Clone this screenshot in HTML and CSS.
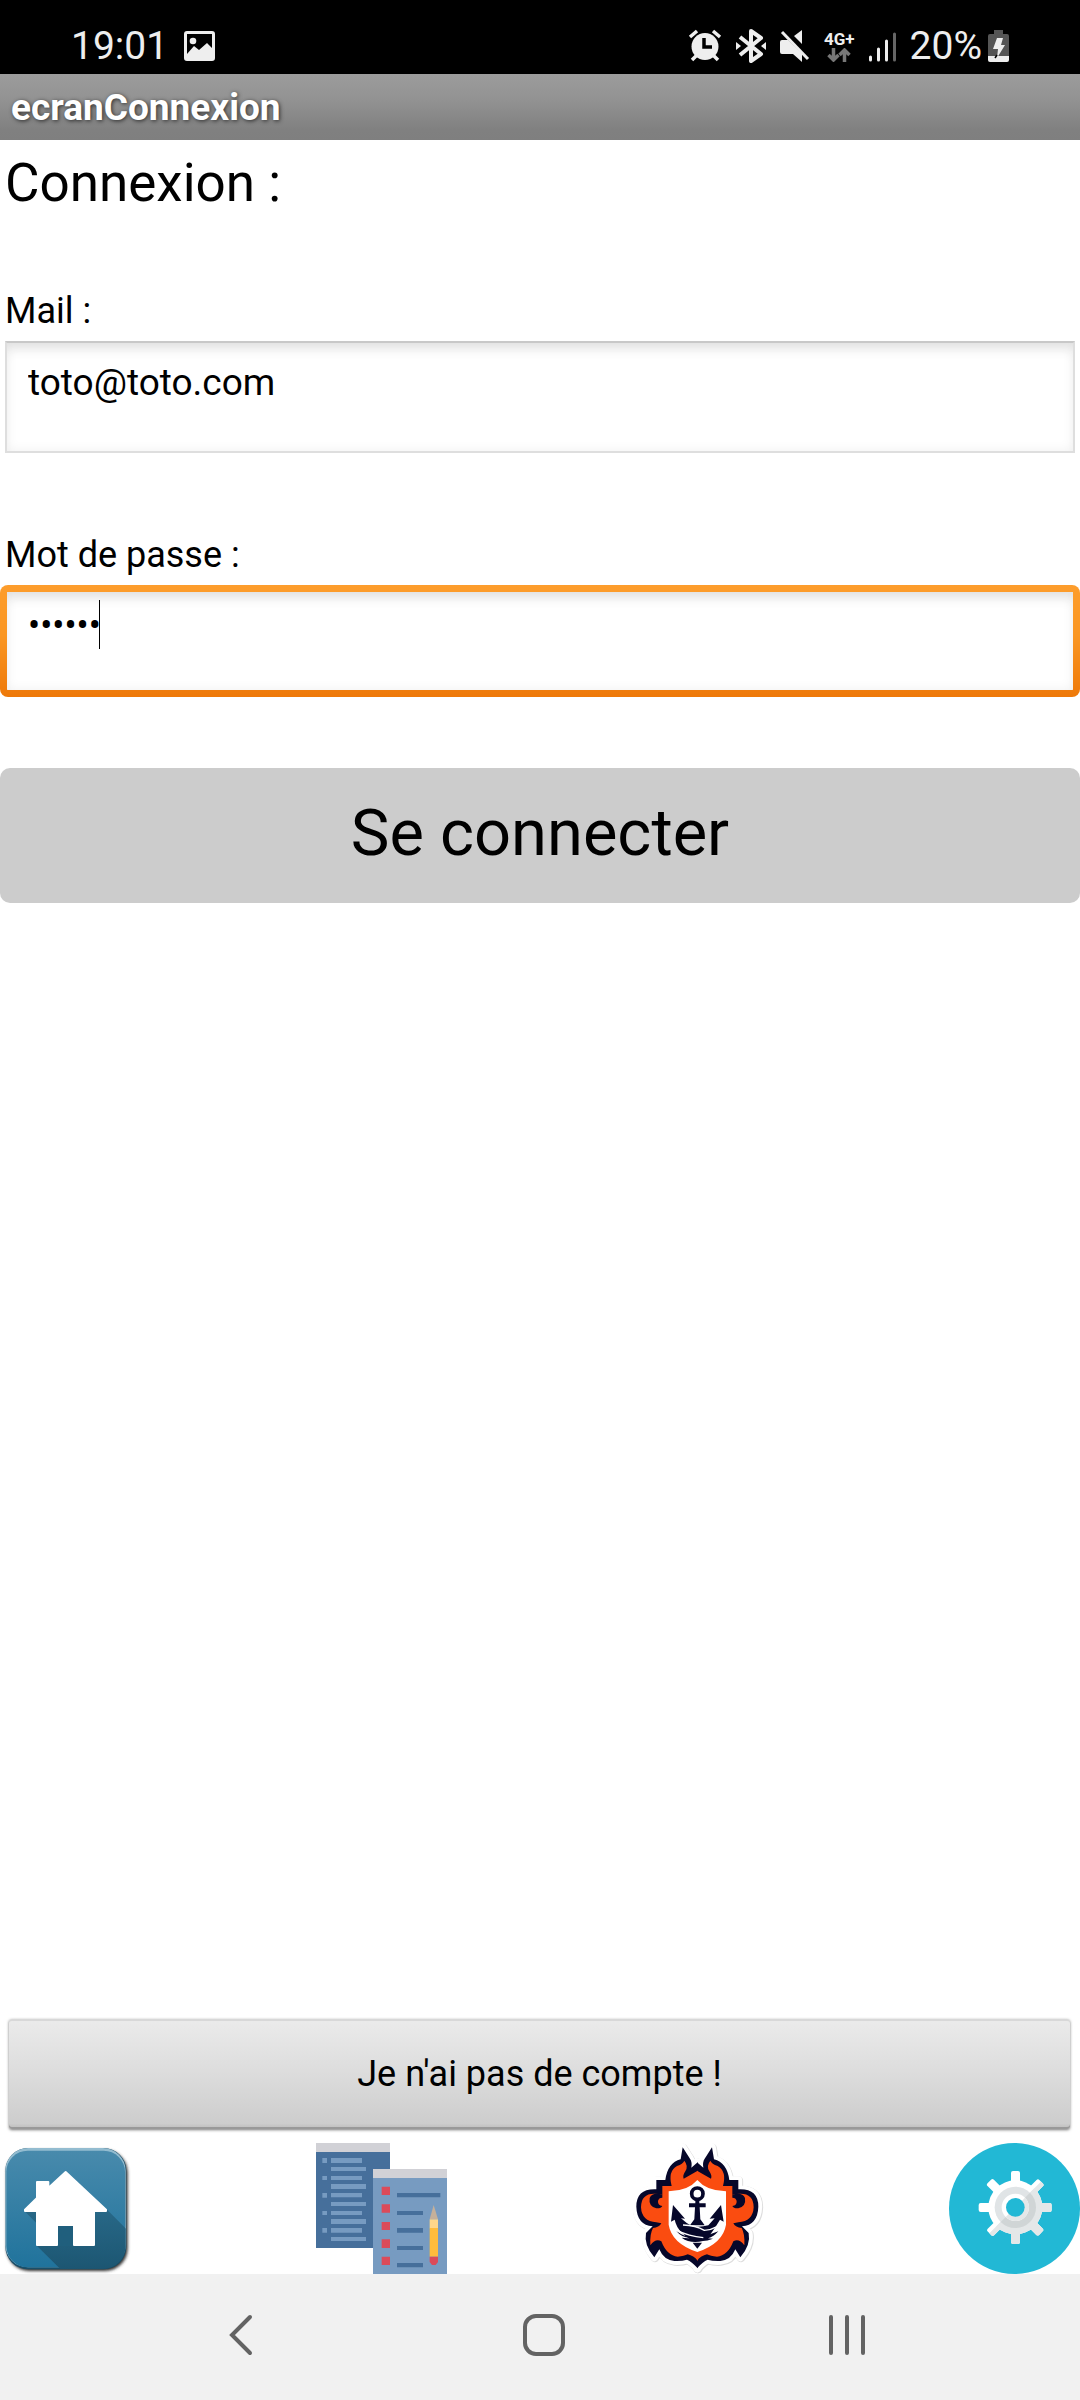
FILE: index.html
```html
<!DOCTYPE html>
<html lang="fr">
<head>
    <meta charset="UTF-8">
    <meta name="viewport" content="width=device-width, initial-scale=1.0">
    <title>ecranConnexion</title>
    <link rel="stylesheet" href="styles.css">
</head>
<body>
    <div class="status-bar">
        <span class="clock">19:01</span>
        <svg class="icon-picture" width="31" height="30" viewBox="0 0 31 30">
            <path fill="#eee" fill-rule="evenodd" d="M3 0h25a3 3 0 0 1 3 3v24a3 3 0 0 1-3 3H3a3 3 0 0 1-3-3V3a3 3 0 0 1 3-3zM3 3v20l7-8 5 4 8-7 5 5V3z"/>
            <circle cx="9" cy="10" r="3.3" fill="#eee"/>
        </svg>
        <div class="status-icons">
            <svg width="34" height="34" viewBox="0 0 34 34">
                <circle cx="17" cy="17.500" r="13.500" fill="#eee"/>
                <path fill="none" stroke="#eee" stroke-width="3.500" d="M2 8l7-6M32 8l-7-6M9 26l-5 5M25 26l5 5"/>
                <path fill="none" stroke="#000" stroke-width="3.500" d="M16 9v9h8"/>
            </svg>
            <svg width="30" height="34" viewBox="0 0 30 34">
                <path fill="none" stroke="#eee" stroke-width="4" stroke-linejoin="round" d="M4 8l21 17-10 7V2l10 7L4 26"/>
                <path fill="#eee" d="M0 13l5 4-5 4zM30 13l-5 4 5 4z"/>
            </svg>
            <svg width="30" height="34" viewBox="0 0 30 34">
                <path fill="#eee" d="M0 13q0-2 2-2h6l14 14v8l-9-8H2q-2 0-2-2zM22 1v14l-8-8z"/>
                <path stroke="#eee" stroke-width="3" d="M2 3l26 27"/>
            </svg>
            <div class="network">
                <span>4G+</span>
                <svg width="24" height="14" viewBox="0 0 24 14">
                    <path fill="none" stroke="#777" stroke-width="3.500" d="M6.500 0v12M1.500 7l5 5 5-5M17.500 14V2M12.500 7l5-5 5 5"/>
                </svg>
            </div>
            <svg width="27" height="34" viewBox="0 0 27 34">
                <path fill="none" stroke="#eee" stroke-width="3" stroke-linecap="round" d="M1.500 28v3M9.500 20v11M17.500 12v19"/>
                <path stroke="#666" stroke-width="3" stroke-linecap="round" d="M25.500 5v26"/>
            </svg>
        </div>
        <span class="battery-level">20%</span>
        <svg class="icon-battery" width="21" height="34" viewBox="0 0 21 34">
            <path fill="#555" d="M6 1h9v4h4q2 0 2 2v20H0V7q0-2 2-2h4z"/>
            <path fill="#eee" d="M0 27h21v4q0 2-2 2H2q-2 0-2-2z"/>
            <path fill="#eee" d="M9 9h6l-2 7h4L9 29l1-9H5z"/>
            <path stroke="#000" stroke-width="1.500" d="M7 29l2-3"/>
        </svg>
    </div>

    <header class="title-bar">ecranConnexion</header>

    <main class="screen">
        <form class="login-form" onsubmit="return false">
            <h1>Connexion :</h1>

            <div class="form-group">
                <label for="mail">Mail :</label>
                <input type="email" id="mail" class="field" value="toto@toto.com">
            </div>

            <div class="form-group">
                <label for="password">Mot de passe :</label>
                <div class="focused-field">
                    <input type="password" id="password" class="field active" value="secret">
                    <span class="caret"></span>
                </div>
            </div>

            <button type="submit" class="btn-login">Se connecter</button>
        </form>

        <button type="button" class="btn-register">Je n'ai pas de compte !</button>

        <nav class="tabs">
            <a href="#accueil" aria-label="Accueil">
                <svg viewBox="0 39 393 393">
                    <defs>
                        <linearGradient id="home-bg" x1="0" y1="0" x2="0" y2="1">
                            <stop offset="0" stop-color="#488aac"/>
                            <stop offset="1" stop-color="#20739c"/>
                        </linearGradient>
                        <linearGradient id="home-shade" x1="0" y1="0" x2="0" y2="1">
                            <stop offset="0" stop-color="#286887"/>
                            <stop offset="1" stop-color="#1c5672"/>
                        </linearGradient>
                        <clipPath id="home-clip"><rect x="16" y="54" width="361" height="362" rx="68"/></clipPath>
                        <filter id="home-shadow"><feGaussianBlur stdDeviation="4"/></filter>
                    </defs>
                    <rect x="20" y="60" width="363" height="363" rx="68" fill="#333" filter="url(#home-shadow)"/>
                    <rect x="16" y="54" width="363" height="364" rx="68" fill="#194f69"/>
                    <rect x="16" y="54" width="361" height="358" rx="68" fill="#93bcd0"/>
                    <rect x="19" y="62" width="356" height="350" rx="64" fill="url(#home-bg)"/>
                    <path clip-path="url(#home-clip)" fill="url(#home-shade)" d="M320 238l60 60v120H182l-74-73V278l-34-34h30z"/>
                    <path fill="#fff" stroke="#fff" stroke-width="6" stroke-linejoin="round" d="M197 126l121 113v4h-36v102h-60v-60h-51v60h-60V243H75v-4l36-35v-48h34v18z"/>
                    <path fill="#205f7d" d="M174 288h45v60h-45z"/>
                </svg>
            </a>
            <a href="#listes" aria-label="Listes">
                <svg viewBox="48 39 393 393">
                    <path fill="#466f9b" d="M48 39h222v315H48z"/>
                    <path fill="#d1d1d6" d="M48 39h222v27H48z"/>
                    <path fill="#779bc1" d="M93 84h93v15H93zM93 111h105v12H93zM93 138h93v12H93zM93 162h105v15H93zM93 189h93v13H93zM93 216h105v12H93zM93 243h93v12H93zM93 267h105v15H93zM93 294h93v14H93zM93 321h105v12H93zM67 84h14v15H67zM67 138h14v12H67zM67 189h14v14H67zM67 243h14v12H67zM67 294h14v14H67z"/>
                    <path fill="#779bc1" d="M219 117h222v315H219z"/>
                    <path fill="#d1d1d6" d="M219 117h222v27H219z"/>
                    <path fill="#db4b5a" d="M245 170h25v25h-25zM245 223h25v25h-25zM245 276h25v24h-25zM245 328h25v26h-25zM245 380h25v25h-25z"/>
                    <path fill="#466f9b" d="M291 189h130v13H291zM291 243h78v12h-78zM291 294h78v14h-78zM291 348h78v12h-78zM291 399h78v13h-78z"/>
                    <path fill="#c5b09a" d="M401 225l13 43h-25z"/>
                    <path fill="#ffd68a" d="M389 268h25v27h-25z"/>
                    <path fill="#ffbc3c" d="M389 294h25v86h-25z"/>
                    <path fill="#db4b5a" d="M389 380h25v16l-7 9h-11l-7-9z"/>
                </svg>
            </a>
            <a href="#equipe" aria-label="Équipe">
                <svg viewBox="38 39 393 393">
                    <defs>
                        <path id="crest-half" d="M232 97L213 113Q216 96 209 86L187 52L181 88Q142 98 135 150H108V178Q48 175 48 230Q50 285 97 289L77 309Q70 345 102 382L117 358Q130 390 162 393Q185 394 200 389Q215 395 232 415Z"/>
                        <g id="crest">
                            <use href="#crest-half"/>
                            <use href="#crest-half" transform="matrix(-1 0 0 1 462 0)"/>
                        </g>
                        <g id="flames">
                            <path fill="#fa4c10" d="M232 122L190 146Q186 137 195 124Q205 108 192 92Q188 102 170 108Q142 124 154 168H126V194Q62 180 62 232Q64 274 108 277L123 280Q116 293 98 294Q88 312 90 346Q106 324 123 334Q140 378 172 380Q192 378 202 373Q220 377 232 392Z"/>
                            <path fill="#06072a" d="M126 194Q96 186 88 204Q84 229 108 235Q122 236 126 228Q112 226 113 213Q115 203 126 203Z"/>
                        </g>
                    </defs>
                    <use href="#crest" fill="#ddd" stroke="#ddd" stroke-width="25" stroke-linejoin="round" x="2" y="2"/>
                    <use href="#crest" fill="#fff" stroke="#fff" stroke-width="23" stroke-linejoin="round"/>
                    <use href="#crest" fill="#06072a"/>
                    <use href="#flames"/>
                    <use href="#flames" transform="matrix(-1 0 0 1 462 0)"/>
                    <path fill="#fff" d="M231 150Q259 183 317 184V284Q308 340 231 366Q154 340 145 284V184Q203 183 231 150Z"/>
                    <circle cx="231" cy="191" r="17" fill="none" stroke="#06072a" stroke-width="11"/>
                    <path fill="#06072a" d="M225 207h12v13h19v12h-18l2 36 13 18h-44l13-18 2-36h-18v-12h19z"/>
                    <path fill="#06072a" d="M158 225L194 266L182 265Q200 282 216 289Q242 292 264 286L283 265L268 266L302 225L310 275L299 269Q278 304 258 328Q215 344 184 307Q168 292 163 269L152 275Z"/>
                    <path fill="#06072a" d="M168 303Q190 320 220 322Q188 328 168 303ZM184 323Q230 330 294 304Q280 320 263 325L278 326Q260 333 248 333Q210 342 184 323ZM217 338h28l-14 18z"/>
                    <path fill="none" stroke="#fff" stroke-width="4" d="M188 285Q226 286 252 301Q272 300 292 289M171 302Q205 318 249 323"/>
                </svg>
            </a>
            <a href="#parametres" aria-label="Paramètres">
                <svg viewBox="57 39 393 393">
                    <defs>
                        <clipPath id="gear-half"><path d="M340 148L172 316v50h220V148z"/></clipPath>
                        <g id="gear">
                            <circle cx="256" cy="232" r="81"/>
                            <rect x="243" y="123" width="27" height="219" rx="6"/>
                            <rect x="243" y="123" width="27" height="219" rx="6" transform="rotate(45 256 232)"/>
                            <rect x="243" y="123" width="27" height="219" rx="6" transform="rotate(90 256 232)"/>
                            <rect x="243" y="123" width="27" height="219" rx="6" transform="rotate(135 256 232)"/>
                        </g>
                    </defs>
                    <circle cx="253.500" cy="235.500" r="196.500" fill="#22b8d5"/>
                    <use href="#gear" fill="#fff"/>
                    <use href="#gear" fill="#e4e7e8" clip-path="url(#gear-half)"/>
                    <circle cx="256" cy="232" r="62" fill="#e0e4e6"/>
                    <circle cx="256" cy="232" r="62" fill="#d0d5d6" clip-path="url(#gear-half)"/>
                    <circle cx="256" cy="232" r="41" fill="#fff"/>
                    <circle cx="256" cy="232" r="41" fill="#e4e7e8" clip-path="url(#gear-half)"/>
                    <circle cx="256" cy="232" r="28" fill="#22b8d5"/>
                </svg>
            </a>
        </nav>
    </main>

    <footer class="system-nav">
        <button type="button" aria-label="Retour">
            <svg width="44" height="44" viewBox="0 0 44 44"><path d="M31 4L13 22l18 18"/></svg>
        </button>
        <button type="button" aria-label="Écran d'accueil">
            <svg width="44" height="44" viewBox="0 0 44 44"><rect x="3" y="3" width="38" height="38" rx="11"/></svg>
        </button>
        <button type="button" aria-label="Applications récentes">
            <svg width="44" height="44" viewBox="0 0 44 44"><path d="M6 4v36M22 4v36M38 4v36"/></svg>
        </button>
    </footer>
</body>
</html>
```

FILE: styles.css
```css
* {
    box-sizing: border-box;
}
body {
    display: flex;
    flex-direction: column;
    min-height: 100vh;
    margin: 0;
    font-family: Roboto, "Liberation Sans", sans-serif;
    font-size: 36px;
    line-height: 43px;
    color: #000;
    background-color: #fff;
}
svg {
    display: block;
}
button, input {
    font-family: inherit;
    color: inherit;
}

/* status bar */
.status-bar {
    display: flex;
    align-items: center;
    height: 74px;
    padding: 18px 71px 0;
    color: #eee;
    background-color: #000;
}
.clock, .battery-level {
    font-size: 39px;
}
.icon-picture {
    margin-left: 16px;
}
.status-icons {
    display: flex;
    align-items: center;
    gap: 14px;
    margin-left: auto;
}
.network {
    display: flex;
    flex-direction: column;
    align-items: center;
    font-size: 17px;
    font-weight: bold;
    line-height: 18px;
}
.battery-level {
    margin-left: 14px;
}
.icon-battery {
    margin-left: 6px;
}

.title-bar {
    padding: 12px 11px 11px;
    font-size: 37px;
    font-weight: bold;
    color: #fff;
    text-shadow: 1px 1px 4px rgba(0, 0, 0, 0.7);
    background: linear-gradient(#9c9c9c, #929292 40%, #808080 85%, #7f7f7f);
}

/* login form */
.screen {
    display: flex;
    flex: 1;
    flex-direction: column;
    padding-top: 12px;
}
h1 {
    margin: 0 5px 76px;
    font-size: 53px;
    font-weight: normal;
    line-height: 62px;
}
.form-group {
    margin-bottom: 81px;
}
.form-group + .form-group {
    margin-bottom: 71px;
}
label {
    display: block;
    margin: 0 5px 8px;
}
.field {
    display: block;
    width: calc(100% - 10px);
    height: 112px;
    margin: 0 5px;
    padding: 17px 21px 47px;
    border: 2px solid #dedede;
    border-top-color: #c8c8c8;
    outline: none;
    font-size: 37px;
    line-height: 43px;
    background-color: #fff;
    box-shadow: inset 0 12px 14px -8px #ddd, inset 0 0 12px #f0f0f0;
}
.focused-field {
    position: relative;
}
.field.active {
    width: 100%;
    margin: 0;
    padding: 12px 21px 43px;
    border: 7px solid transparent;
    border-radius: 8px;
    font-size: 36px;
    caret-color: transparent;
    background: linear-gradient(#fff, #fff) padding-box, linear-gradient(#fd9d2c, #fa9622 45%, #ee7909) border-box;
}
.caret {
    position: absolute;
    top: 15px;
    left: 99px;
    width: 1px;
    height: 49px;
    background-color: #000;
}
.btn-login {
    display: block;
    width: 100%;
    padding: 27px 10px 31px;
    border: none;
    border-radius: 10px;
    font-size: 65px;
    line-height: 77px;
    background-color: #ccc;
}
.btn-register {
    margin: auto 10px 14px 9px;
    padding: 34px 10px 33px;
    border: none;
    border-radius: 3px;
    font-size: 36px;
    line-height: 43px;
    background: linear-gradient(#ebebeb, #dcdcdc 50%, #cdcdcd 95%, #bbb);
    box-shadow: inset 0 2px 0 #d8d8d8, inset 0 -2px 0 #999, 0 1px 3px #777;
}

/* bottom tabs */
.tabs {
    display: flex;
    justify-content: space-between;
}
.tabs a {
    width: 131px;
}
.system-nav {
    display: grid;
    grid-template-columns: repeat(3, 1fr);
    padding: 39px 82px 43px 90px;
    background-color: #f1f1f1;
}
.system-nav button {
    display: flex;
    justify-content: center;
    padding: 0;
    border: none;
    background: none;
}
.system-nav svg {
    fill: none;
    stroke: #636363;
    stroke-width: 4;
    stroke-linecap: round;
}
```
